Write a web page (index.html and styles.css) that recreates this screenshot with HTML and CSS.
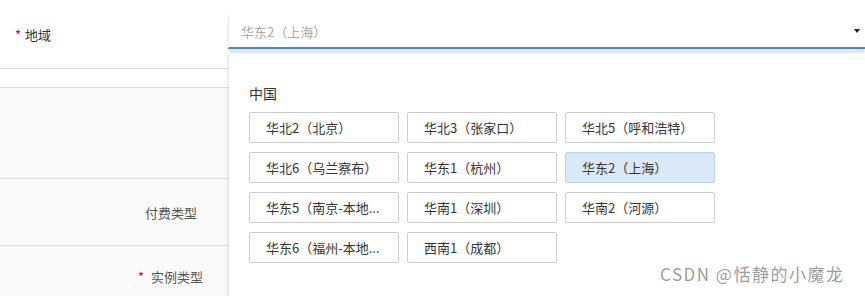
FILE: index.html
```html
<!DOCTYPE html>
<html lang="zh-CN">
<head>
  <meta charset="UTF-8">
  <meta name="viewport" content="width=device-width, initial-scale=1.0">
  <title>地域选择</title>
  <link rel="stylesheet" href="styles.css">
</head>
<body>
  <div id="form">
    <div class="row row-region">
      <div class="label label-left"><span class="req">*</span>地域</div>
      <div class="select">
        <span class="placeholder">华东2（上海）</span>
        <span class="arrow"></span>
      </div>
    </div>
    <div class="row row-gap"></div>
    <div class="row row-tall gray"></div>
    <div class="row row-pay gray">
      <div class="label">付费类型</div>
    </div>
    <div class="row row-type gray">
      <div class="label label-type"><span class="req">*</span> 实例类型</div>
    </div>

    <div class="dropdown">
      <div class="group-title">中国</div>
      <ul class="options">
        <li>华北2（北京）</li>
        <li>华北3（张家口）</li>
        <li>华北5（呼和浩特）</li>
        <li>华北6（乌兰察布）</li>
        <li>华东1（杭州）</li>
        <li class="active">华东2（上海）</li>
        <li title="华东5（南京-本地地域）">华东5（南京-本地...</li>
        <li>华南1（深圳）</li>
        <li>华南2（河源）</li>
        <li title="华东6（福州-本地地域）">华东6（福州-本地...</li>
        <li>西南1（成都）</li>
      </ul>
    </div>

    <div class="watermark">CSDN @恬静的小魔龙</div>
  </div>
</body>
</html>
```

FILE: styles.css
```css
* {
  margin: 0;
  padding: 0;
  box-sizing: border-box;
}

body {
  font-family: "Noto Sans CJK SC", "Noto Sans", sans-serif;
  font-size: 13px;
  color: #333;
  background: #fff;
}

#form {
  position: relative;
  width: 865px;
  height: 296px;
  overflow: hidden;
}

.row {
  display: flex;
  align-items: center;
  border-bottom: 1px solid #dcdcdc;
}
.row.gray {
  background: #fafafa;
}
.row-region {
  height: 69px;
  align-items: stretch;
}
.row-gap {
  height: 19px;
}
.row-tall {
  height: 91px;
}
.row-pay {
  height: 67px;
}
.row-type {
  height: 60px;
  border-bottom: none;
}

.label {
  width: 228px;
  padding-right: 31px;
  text-align: right;
  color: #555;
}
.label-left {
  display: flex;
  align-items: center;
  text-align: left;
  padding-left: 15px;
  color: #333;
}
.label-type {
  padding-right: 25px;
}
.req {
  color: #d0021b;
  margin-right: 4px;
}

.select {
  flex: 1;
  display: flex;
  align-items: center;
  justify-content: space-between;
  margin-top: 15px;
  height: 34px;
  padding: 0 5px 0 12px;
  border-left: 1px solid #eee;
  border-bottom: 2px solid #4a86c2;
  box-shadow: 0 3px 3px rgba(100, 130, 170, .18);
}
.placeholder {
  color: #aaa;
}
.arrow {
  width: 0;
  height: 0;
  border-left: 3px solid transparent;
  border-right: 3px solid transparent;
  border-top: 4px solid #222;
}

.dropdown {
  position: absolute;
  left: 229px;
  top: 53px;
  right: 0;
  height: 260px;
  padding: 29px 20px 0;
  background: #fff;
  box-shadow: 0 0 4px rgba(0, 0, 0, .18);
}
.group-title {
  font-size: 14px;
  line-height: 22px;
  color: #333;
  margin-bottom: 8px;
}
.options {
  list-style: none;
  display: grid;
  grid-template-columns: repeat(3, 150px);
  column-gap: 8px;
  row-gap: 9px;
}
.options li {
  height: 31px;
  line-height: 29px;
  padding: 0 8px 0 16px;
  border: 1px solid #ccc;
  border-radius: 2px;
  color: #333;
  white-space: nowrap;
  cursor: pointer;
}
.options li.active {
  background: #d9e9f7;
  border-color: #b7d3ec;
}

.watermark {
  position: absolute;
  left: 660px;
  top: 261px;
  font-size: 17px;
  letter-spacing: 1.5px;
  color: rgba(110, 110, 110, .7);
  white-space: nowrap;
}
```
